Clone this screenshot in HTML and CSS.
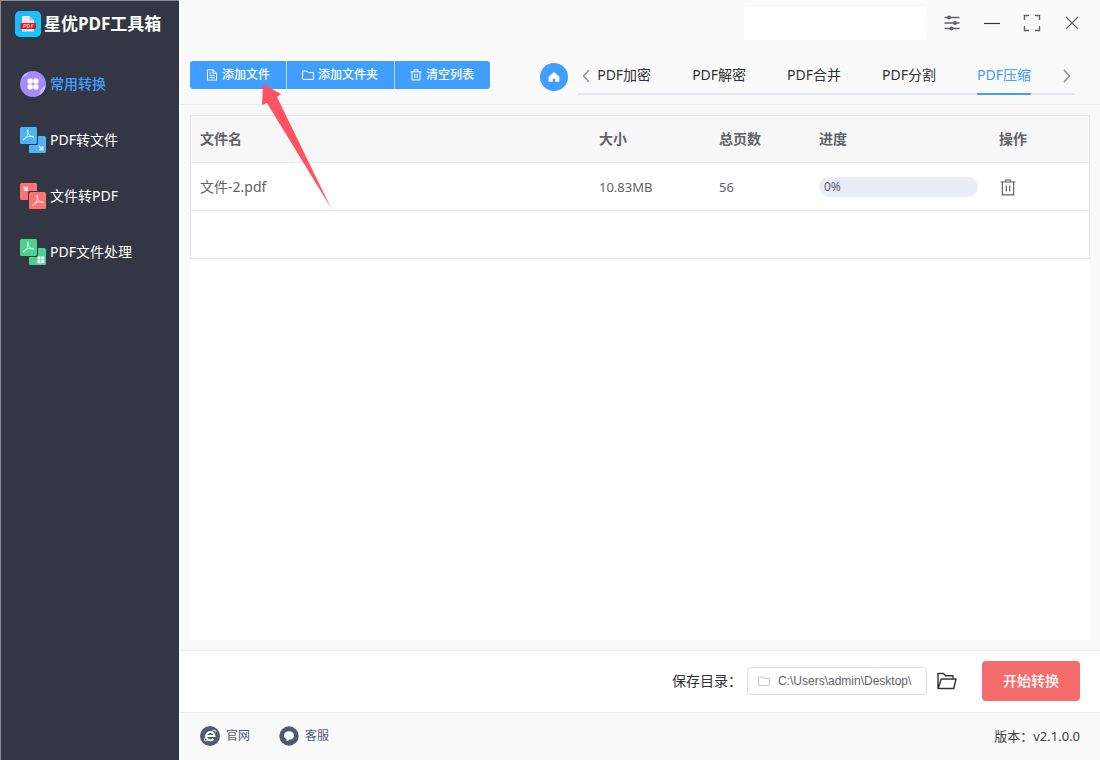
FILE: index.html
```html
<!DOCTYPE html>
<html lang="zh-CN">
<head>
<meta charset="utf-8">
<title>星优PDF工具箱</title>
<link rel="stylesheet" href="styles.css">
</head>
<body>
<svg class="defs" width="0" height="0" aria-hidden="true">
  <symbol id="acro" viewBox="0 0 12 12"><path d="M1 10.6C3.6 9.6 6 6 5.6 1.8C5.5 .6 4.7 1 4.9 2.2C5.4 5.4 8 7.8 11 8.2C11.6 7.2 8.2 6.8 5.4 7.7C3.6 8.2 1.8 9 1 10.6Z" fill="none" stroke="#fff" stroke-opacity=".8" stroke-width=".9"/></symbol>
</svg>
<div class="app">
  <aside class="sidebar">
    <h1 class="brand">
      <svg width="26" height="26" viewBox="0 0 26 26" aria-hidden="true">
        <defs><linearGradient id="lg" x1="0" y1="0" x2="1" y2="1"><stop offset="0" stop-color="#25b2fb"/><stop offset="1" stop-color="#0cd0fd"/></linearGradient></defs>
        <rect width="26" height="26" rx="5" fill="url(#lg)"/>
        <path d="M7 5h7.500L19 9.500V20.500H7z" fill="#ebebeb"/><path d="M14.500 5L19 9.500H14.500z" fill="#bdbdbd"/>
        <rect x="5.500" y="12" width="15.500" height="6" rx="1" fill="#f5121b"/>
        <path d="M8.800 16.500v-3h1.500a.8.8 0 0 1 0 1.700H8.800M12.300 13.500v3h.9a1.500 1.500 0 0 0 0-3zM16.500 16.500v-3h2M16.500 15h1.500" fill="none" stroke="#fff" stroke-width=".7"/>
      </svg>
      <span>星优PDF工具箱</span>
    </h1>
    <nav class="menu">
      <a class="menu-item active" href="#common">
        <svg width="26" height="26" viewBox="0 0 26 26" aria-hidden="true"><circle cx="13" cy="13" r="13" fill="#a58bfa"/><path d="M2 6.200A13 13 0 0 1 9 .7Q7 4.800 2 6.200zM25.600 14.500A13 13 0 0 1 19.500 24Q20 17 25.600 14.500z" fill="#cbbcfc"/><g fill="#fff"><rect x="7.500" y="7.500" width="5.300" height="5.300" rx="1.800"/><rect x="13.200" y="7.500" width="5.300" height="5.300" rx="1.800"/><rect x="7.500" y="13.200" width="5.300" height="5.300" rx="1.800"/><rect x="13.200" y="13.200" width="5.300" height="5.300" rx="1.800"/></g></svg>
        <span>常用转换</span>
      </a>
      <a class="menu-item" href="#pdf-to-file">
        <svg width="26" height="26" viewBox="0 0 26 26" aria-hidden="true"><rect width="17" height="17" rx="1.500" fill="#4fb3f3"/><path d="M18 9h6.500a1.500 1.500 0 0 1 1.500 1.500v14a1.500 1.500 0 0 1-1.500 1.500h-14A1.500 1.500 0 0 1 9 24.500V18h7.500a1.500 1.500 0 0 0 1.500-1.500z" fill="#4fb3f3"/><use href="#acro" x="2" y="1.500" width="13" height="13"/><path d="M19 19l3.500 3.500M22.700 19v3.700H19" fill="none" stroke="#fff" stroke-width="1.200"/></svg>
        <span>PDF转文件</span>
      </a>
      <a class="menu-item" href="#file-to-pdf">
        <svg width="26" height="26" viewBox="0 0 26 26" aria-hidden="true"><path d="M1.500 0h14A1.500 1.500 0 0 1 17 1.500V8H9.500A1.500 1.500 0 0 0 8 9.500V17H1.500A1.500 1.500 0 0 1 0 15.500v-14A1.500 1.500 0 0 1 1.500 0z" fill="#fd7272"/><rect x="9" y="9" width="17" height="17" rx="1.500" fill="#fd7272"/><use href="#acro" x="11.500" y="11" width="13" height="13"/><path d="M3.500 3.500L7 7M7.200 3.500v3.700H3.500" fill="none" stroke="#fff" stroke-width="1.200"/></svg>
        <span>文件转PDF</span>
      </a>
      <a class="menu-item" href="#pdf-process">
        <svg width="26" height="26" viewBox="0 0 26 26" aria-hidden="true"><rect width="17" height="17" rx="1.500" fill="#4dd191"/><path d="M18 9h6.500a1.500 1.500 0 0 1 1.500 1.500v14a1.500 1.500 0 0 1-1.500 1.500h-14A1.500 1.500 0 0 1 9 24.500V18h7.500a1.500 1.500 0 0 0 1.500-1.500z" fill="#4dd191"/><use href="#acro" x="2" y="1.500" width="13" height="13"/><path d="M17.500 17.500h3v3h-3zM21.200 17.500h3v3h-3zM17.500 21.200h3v3h-3zM21.200 21.200h3v3h-3z" fill="#fff"/></svg>
        <span>PDF文件处理</span>
      </a>
    </nav>
  </aside>

  <main class="main">
    <header class="titlebar">
      <div class="notice"></div>
      <div class="window-controls">
        <button type="button" aria-label="设置"><svg width="18" height="18" viewBox="0 0 18 18"><path d="M1.500 3.500h15M1.500 9h15M1.500 14.500h15" stroke="#5f6063" stroke-width="1.300"/><g fill="#5f6063"><circle cx="6" cy="3.500" r="1.900"/><circle cx="12" cy="9" r="1.900"/><circle cx="8.500" cy="14.500" r="1.900"/></g></svg></button>
        <button type="button" aria-label="最小化"><svg width="18" height="18" viewBox="0 0 18 18"><path d="M1 9.500h16" stroke="#333" stroke-width="1.200"/></svg></button>
        <button type="button" aria-label="最大化"><svg width="18" height="18" viewBox="0 0 18 18"><path d="M1.500 6V1.500H6M12 1.500h4.500V6M16.500 12v4.500H12M6 16.500H1.500V12" fill="none" stroke="#5f6063" stroke-width="1.400"/></svg></button>
        <button type="button" aria-label="关闭"><svg width="18" height="18" viewBox="0 0 18 18"><path d="M3 3l12 12M15 3L3 15" stroke="#5f6063" stroke-width="1.200"/></svg></button>
      </div>
    </header>

    <div class="toolbar">
      <div class="button-group">
        <button type="button"><svg width="12" height="12" viewBox="0 0 12 12"><path d="M1.500 .9h5.700l3.300 3.100v7.100h-9zM7 1v3.200h3.400M3.500 4.200h2M3.500 6.500h5M3.500 8.700h5" fill="none" stroke="#fff"/></svg>添加文件</button>
        <button type="button"><svg width="12" height="12" viewBox="0 0 12 12"><path d="M.6 2h4.200l1.400 1.500h5.200v6.900H.6z" fill="none" stroke="#fff"/></svg>添加文件夹</button>
        <button type="button"><svg width="12" height="12" viewBox="0 0 12 12"><path d="M.5 2.800h11M4 2.500V.9h4v1.600M2 3v8h8V3M4.800 5v4M7.200 5v4" fill="none" stroke="#fff"/></svg>清空列表</button>
      </div>
      <div class="feature-nav">
        <button class="home" type="button" aria-label="首页"><svg width="12" height="12" viewBox="0 0 12 12"><path d="M6 1.200L.9 5.700V10.600h3.600V7.400h3v3.200h3.600V5.700z" fill="#fff" stroke="#fff" stroke-width=".5" stroke-linejoin="round"/></svg></button>
        <div class="tabs">
          <button class="tab-arrow" type="button" aria-label="上一页"><svg width="8" height="14" viewBox="0 0 8 14"><path d="M7 1L1.500 7L7 13" fill="none" stroke="#8b8e94" stroke-width="1.500"/></svg></button>
          <div class="tab-list">
            <a href="#encrypt">PDF加密</a>
            <a href="#decrypt">PDF解密</a>
            <a href="#merge">PDF合并</a>
            <a href="#split">PDF分割</a>
            <a class="active" href="#compress">PDF压缩</a>
          </div>
          <button class="tab-arrow" type="button" aria-label="下一页"><svg width="8" height="14" viewBox="0 0 8 14"><path d="M1 1L6.500 7L1 13" fill="none" stroke="#8b8e94" stroke-width="1.500"/></svg></button>
        </div>
      </div>
    </div>

    <section class="list">
      <table class="files">
        <colgroup><col><col class="c-size"><col class="c-pages"><col class="c-progress"><col class="c-action"></colgroup>
        <thead><tr><th>文件名</th><th>大小</th><th>总页数</th><th>进度</th><th>操作</th></tr></thead>
        <tbody>
          <tr>
            <td>文件-2.pdf</td><td class="num">10.83MB</td><td class="num">56</td>
            <td><div class="progress" role="progressbar" aria-label="进度" aria-valuenow="0">0%</div></td>
            <td><button class="trash" type="button" aria-label="删除"><svg width="16" height="18" viewBox="0 -1 16 18"><path d="M.5 3h15M5.500 2.500V1h5v1.500M2.300 3.500v12.300h11.400V3.500M6.300 6.500v6M9.700 6.500v6" fill="none" stroke="#606266" stroke-width="1.200"/></svg></button></td>
          </tr>
          <tr><td></td><td></td><td></td><td></td><td></td></tr>
        </tbody>
      </table>
    </section>

    <section class="output">
      <label for="dir">保存目录：</label>
      <div class="dir-box">
        <svg width="12" height="12" viewBox="0 0 12 12" aria-hidden="true"><path d="M.6 2h4.200l1.400 1.500h5.200v6.900H.6z" fill="none" stroke="#c0c4cc"/></svg>
        <input id="dir" type="text" value="C:\Users\admin\Desktop\">
      </div>
      <button class="browse" type="button" aria-label="打开目录"><svg width="20" height="18" viewBox="0 0 20 18"><path d="M1 16.500V1.500h5.500l2 2.300H16v3M1.200 16.500L4.200 7H19l-2.200 9.500z" fill="none" stroke="#333" stroke-width="1.400" stroke-linejoin="round"/></svg></button>
      <button class="start" type="button">开始转换</button>
    </section>

    <footer class="footer">
      <a href="#site"><svg width="20" height="20" viewBox="0 0 20 20" aria-hidden="true"><circle cx="10" cy="10" r="10" fill="#505a70"/><path d="M6.300 10h8.200a4.200 4.200 0 1 0-1 2.900" fill="none" stroke="#fff" stroke-width="2"/><path d="M12 5.200c3-1.500 4.600-1 3.600 1.300M6 10.500c-2.500 3.500-2 5.600 1.700 3.800" fill="none" stroke="#fff"/></svg>官网</a>
      <a href="#service"><svg width="20" height="20" viewBox="0 0 20 20" aria-hidden="true"><circle cx="10" cy="10" r="9.700" fill="#505a70"/><path d="M10 5.200c3 0 5 1.700 5 4.200s-2 4.300-4.500 4.200c-.8 1-1.800 1.300-3.200 1.200.5-.6.500-1.200.2-1.800C6 12.300 5 11.100 5 9.400c0-2.500 2-4.200 5-4.200z" fill="#fff"/></svg>客服</a>
      <span class="version">版本：v2.1.0.0</span>
    </footer>
  </main>
  <svg class="pointer" width="70" height="125" viewBox="0 0 70 125" aria-hidden="true"><path d="M1 0L19 10L15 13L69 124L5 19L0 21z" fill="#ff5263"/></svg>
</div>
</body>
</html>
```
FILE: styles.css
```css
* { box-sizing: border-box; }
body {
  margin: 0;
  font-family: "Noto Sans", "Noto Sans CJK SC", sans-serif;
  font-size: 14px;
  line-height: 20px;
  color: #303133;
}
button, input { font: inherit; }
button { border: 0; padding: 0; background: none; cursor: pointer; }
a { color: inherit; text-decoration: none; }
svg { display: block; flex: none; }
.defs { position: absolute; }

.app { position: relative; display: flex; min-height: 100vh; background: #fafafa; }

.sidebar {
  flex: none;
  width: 179px;
  background: #333743;
  border-top: 1px solid #8b8d93;
  border-left: 1px solid #8b8d93;
  color: #fff;
}
.brand {
  display: flex;
  align-items: center;
  gap: 3px;
  margin: 0;
  padding: 10px 0 0 14px;
  font-size: 17px;
  line-height: 26px;
  font-weight: 700;
  white-space: nowrap;
}
.menu { padding-top: 19px; }
.menu-item { display: flex; align-items: center; gap: 4px; height: 56px; padding-left: 19px; }
.menu-item.active { color: #409eff; font-weight: 500; }

.main { flex: 1; min-width: 0; display: flex; flex-direction: column; margin-left: 1px; }

.titlebar { display: flex; justify-content: flex-end; align-items: center; gap: 5px; height: 46px; padding-right: 8px; }
.notice { width: 183px; height: 33px; border-radius: 4px; background: #fff; }
.window-controls { display: flex; }
.window-controls button { display: grid; place-items: center; width: 40px; height: 33px; }

.toolbar {
  display: flex;
  justify-content: space-between;
  align-items: flex-start;
  padding: 15px 25px 9px 10px;
  border-bottom: 1px solid #ebebed;
}
.button-group { display: flex; border-radius: 3px; overflow: hidden; background: #409eff; }
.button-group button {
  display: flex;
  align-items: center;
  gap: 4px;
  height: 28px;
  padding: 0 16px;
  color: #fff;
  font-size: 12px;
  font-weight: 500;
}
.button-group button + button { padding-left: 15px; border-left: 1px solid #b3d8ff; }
.feature-nav { display: flex; align-items: flex-start; gap: 10px; }
.home { display: grid; place-items: center; width: 28px; height: 28px; margin-top: 2px; border-radius: 50%; background: #409eff; }
.tabs { display: flex; height: 34px; border-bottom: 2px solid #e4e7ed; padding: 0 4px; }
.tab-arrow { height: 30px; }
.tab-list { display: flex; gap: 41px; padding: 0 32px 0 7px; }
.tab-list a { height: 34px; line-height: 28px; white-space: nowrap; }
.tab-list .active { color: #409eff; border-bottom: 2px solid #409eff; }

.list { flex: 1; margin: 10px; background: #fff; }
.files { width: 100%; table-layout: fixed; border: 1px solid #e6e6e8; border-bottom: 0; border-spacing: 0; color: #606266; }
.files th, .files td { height: 48px; padding: 0 0 0 9px; border-bottom: 1px solid #e6e6e8; text-align: left; }
.files th { height: 47px; background: #f7f7f7; font-weight: 700; }
.files .num { font-size: 13px; }
.c-size { width: 120px; }
.c-pages { width: 100px; }
.c-progress { width: 180px; }
.c-action { width: 99px; }
.progress { width: 159px; height: 20px; padding-left: 5px; border-radius: 10px; background: #e9edf6; font-size: 12px; }
.trash { display: block; margin-left: 1px; }

.output {
  display: flex;
  justify-content: flex-end;
  align-items: center;
  height: 62px;
  padding: 0 20px 2px 0;
  background: #fff;
  border-top: 1px solid #ebebed;
}
.dir-box {
  display: flex;
  align-items: center;
  gap: 8px;
  width: 180px;
  height: 28px;
  margin-left: 5px;
  padding: 0 10px;
  border: 1px solid #dcdfe6;
  border-radius: 4px;
}
.dir-box input { flex: 1; min-width: 0; border: 0; padding: 0; outline: 0; background: none; color: #606266; font: 12px "Liberation Sans", sans-serif; }
.browse { margin: 0 25px 0 10px; }
.start { width: 98px; height: 40px; border-radius: 4px; background: #f56c6c; color: #fff; font-weight: 500; }

.footer {
  display: flex;
  align-items: center;
  gap: 29px;
  height: 48px;
  padding: 0 20px 2px;
  border-top: 1px solid #ebebed;
  font-size: 12px;
  color: #505a70;
}
.footer a { display: flex; align-items: center; gap: 6px; }
.version { margin-left: auto; font-size: 13px; color: #404144; }

.pointer { position: absolute; left: 262px; top: 84px; pointer-events: none; }
```
